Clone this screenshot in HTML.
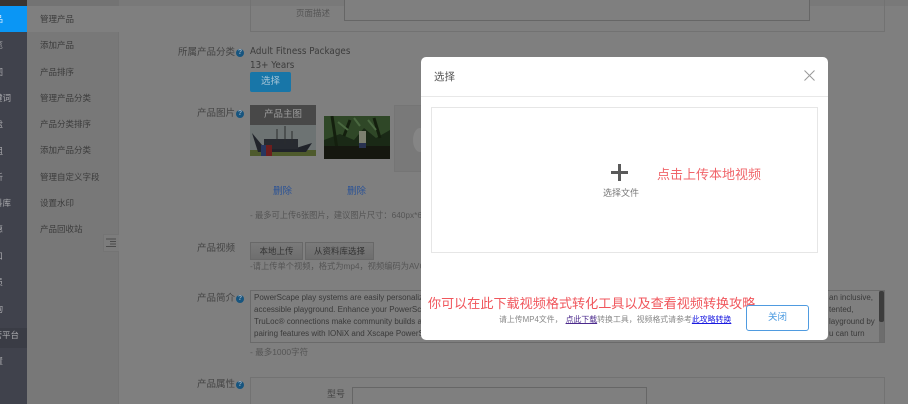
<!DOCTYPE html>
<html lang="zh"><head><meta charset="utf-8"><style>
html,body{margin:0;padding:0;width:908px;height:404px;overflow:hidden;background:#7f7f7f}
#w{position:absolute;left:0;top:0;width:908px;height:404px;overflow:hidden;background:#7f7f7f;font-family:"Liberation Sans","Noto Sans CJK SC",sans-serif;font-size:9px;color:#333;filter:blur(.35px)}
#w div,#w svg{position:absolute;box-sizing:border-box}
.t{white-space:nowrap;line-height:12px}
.s{left:0;width:3px;height:14px;line-height:14px;font-size:8.500px;color:#a9a9ad;text-align:right;overflow:hidden;white-space:nowrap;direction:rtl}
.m{left:40px;font-size:8.500px;color:#3c3c3c;white-space:nowrap;line-height:12px}
.l{font-size:9.500px;color:#444;white-space:nowrap;line-height:12px}
.q{width:8px;height:8px;border-radius:50%;background:#17557f;color:#9ab;font-size:7px;line-height:8px;text-align:center;font-weight:bold}
.g{color:#555;font-size:8.250px;white-space:nowrap;line-height:12px}
.p{font-size:8px;color:#3a3a3a}
</style></head><body><div id="w">
<div style="left:0;top:0;width:27px;height:404px;background:#40424c"></div>
<div style="left:0;top:0;width:27px;height:6px;background:#3a3430"></div>
<div style="left:0;top:6px;width:27px;height:26px;background:#0a96f5"></div>
<div style="left:0;top:328px;width:27px;height:20px;background:#3a3c45"></div>
<div class="s" style="top:12px;color:#dfefff">品</div>
<div class="s" style="top:38px">览</div>
<div class="s" style="top:65px">图</div>
<div class="s" style="top:91px;width:11px">键词</div>
<div class="s" style="top:117px">盘</div>
<div class="s" style="top:144px">组</div>
<div class="s" style="top:170px">析</div>
<div class="s" style="top:196px;width:11px">料库</div>
<div class="s" style="top:222px">惠</div>
<div class="s" style="top:249px">口</div>
<div class="s" style="top:275px">员</div>
<div class="s" style="top:302px">询</div>
<div class="s" style="top:328px;width:19px">营平台</div>
<div class="s" style="top:354px">置</div>

<div style="left:27px;top:0;width:92px;height:404px;background:#787878;border-right:1px solid #747474"></div>
<div style="left:27px;top:0;width:92px;height:6px;background:#737373"></div>
<div style="left:27px;top:6px;width:93px;height:26px;background:#7f7f7f"></div>
<div class="m" style="top:13px">管理产品</div>
<div class="m" style="top:39px">添加产品</div>
<div class="m" style="top:66px">产品排序</div>
<div class="m" style="top:92px">管理产品分类</div>
<div class="m" style="top:118px">产品分类排序</div>
<div class="m" style="top:144px">添加产品分类</div>
<div class="m" style="top:171px">管理自定义字段</div>
<div class="m" style="top:197px">设置水印</div>
<div class="m" style="top:223px">产品回收站</div>
<div style="left:103px;top:234px;width:16px;height:18px;background:#7c7c7c;border:1px solid #747474;border-right:0"></div>
<svg style="left:106px;top:238px" width="11" height="10" viewBox="0 0 11 10"><path d="M0 1h10M4 3.500h6M4 6h6M0 8.500h10" stroke="#4a4a4a" stroke-width="1" fill="none"/></svg>

<div style="left:119px;top:0;width:789px;height:6px;background:#797979"></div>
<div style="left:250px;top:0;width:635px;height:32px;border:1px solid #727272;border-top:0"></div>
<div class="g" style="left:296px;top:7px;font-size:8.500px">页面描述</div>
<div style="left:344px;top:-2px;width:466px;height:23px;border:1px solid #666;background:#7f7f7f"></div>

<div class="l" style="left:178px;top:47px">所属产品分类</div><div class="q" style="left:236px;top:49px">?</div>
<div class="t" style="left:250px;top:46px;font-size:10px;letter-spacing:.05px;color:#3c3c3c;font-family:'DejaVu Sans','Liberation Sans',sans-serif;transform-origin:0 50%;transform:scaleX(.875)">Adult Fitness Packages</div>
<div class="t" style="left:250px;top:60px;font-size:10px;color:#3c3c3c;font-family:'DejaVu Sans','Liberation Sans',sans-serif;transform-origin:0 50%;transform:scaleX(.875)">13+ Years</div>
<div style="left:250px;top:72px;width:41px;height:20px;background:#1876a8;border-radius:2px;color:#a8c6d8;font-size:9.500px;line-height:20px;text-align:center">选择</div>

<div class="l" style="left:197px;top:108px">产品图片</div><div class="q" style="left:236px;top:110px">?</div>
<div style="left:250px;top:105px;width:66px;height:20px;background:#484848;color:#9d9d9d;font-size:9.500px;line-height:20px;text-align:center">产品主图</div>
<svg style="left:250px;top:125px" width="66" height="31" viewBox="0 0 66 31"><rect width="66" height="31" fill="#6d7373"/><rect y="25" width="66" height="6" fill="#4e5a2c"/><path d="M2 8l10 12h24l10 3 16-5-6 9H8z" fill="#20232a"/><path d="M14 14h34v10H14z" fill="#272a30"/><path d="M35 1v18M27 4v14M42 6v12" stroke="#2a2c2e" stroke-width="1"/><rect x="11" y="20" width="5" height="11" fill="#27365f"/><rect x="16" y="20" width="6" height="11" fill="#6d1d1d"/></svg>
<svg style="left:324px;top:116px" width="66" height="43" viewBox="0 0 66 43"><rect width="66" height="43" fill="#1a2916"/><path d="M0 0h66v14l-14 8-12-10-10 12-14-6-16 6z" fill="#2f4727"/><path d="M8 0l6 40M26 4l-6 16M50 2l6 20" stroke="#141f0e" stroke-width="3"/><path d="M14 6l10 8M44 4l8 10M30 2l6 8" stroke="#4a6840" stroke-width="2"/><rect y="30" width="66" height="13" fill="#15170f"/><rect x="35" y="15" width="7" height="12" fill="#7d8070"/><rect x="35" y="27" width="7" height="5" fill="#283250"/></svg>
<div style="left:394px;top:105px;width:28px;height:67px;background:#797979;border:1px solid #757575"></div>
<div style="left:413px;top:128px;width:14px;height:24px;border-radius:50%;background:#858585"></div>
<div class="t" style="left:273px;top:186px;font-size:9.500px;color:#2a5296">删除</div>
<div class="t" style="left:347px;top:186px;font-size:9.500px;color:#2a5296">删除</div>
<div class="g" style="left:250px;top:210px;width:171px;overflow:hidden">- 最多可上传6张图片，建议图片尺寸：640px*640px</div>

<div class="l" style="left:197px;top:243px">产品视频</div>
<div style="left:250px;top:242px;width:53px;height:18px;background:linear-gradient(#7a7a7a,#6e6e6e);border:1px solid #686868;font-size:8.500px;line-height:16px;text-align:center;color:#333">本地上传</div>
<div style="left:305px;top:242px;width:69px;height:18px;background:linear-gradient(#7a7a7a,#6e6e6e);border:1px solid #686868;font-size:8.500px;line-height:16px;text-align:center;color:#333">从资料库选择</div>
<div class="g" style="left:250px;top:261px;width:171px;overflow:hidden">-请上传单个视频，格式为mp4，视频编码为AVC(H264)</div>

<div class="l" style="left:197px;top:293px">产品简介</div><div class="q" style="left:236px;top:295px">?</div>
<div style="left:250px;top:290px;width:635px;height:53px;border:1px solid #6a6a6a"></div>
<div class="t p" style="left:254px;top:292px;width:170px;overflow:hidden">PowerScape play systems are easily personalized</div>
<div class="t p" style="left:254px;top:304px;width:170px;overflow:hidden">accessible playground. Enhance your PowerScape</div>
<div class="t p" style="left:254px;top:316px;width:170px;overflow:hidden">TruLoc® connections make community builds a</div>
<div class="t p" style="left:254px;top:328px;width:170px;overflow:hidden">pairing features with IONiX and Xscape PowerScape</div>
<div class="t p" style="left:829px;top:292px">an inclusive,</div>
<div class="t p" style="left:829px;top:304px">tented,</div>
<div class="t p" style="left:829px;top:316px">layground by</div>
<div class="t p" style="left:829px;top:328px">u can turn</div>
<div style="left:879px;top:291px;width:5px;height:51px;background:#6d6d6d"></div>
<div style="left:879px;top:291px;width:5px;height:31px;background:#3c3c3c;border-radius:2px"></div>
<div class="g" style="left:250px;top:346px;font-size:8.500px">- 最多1000字符</div>

<div class="l" style="left:197px;top:379px">产品属性</div><div class="q" style="left:236px;top:381px">?</div>
<div style="left:250px;top:377px;width:635px;height:40px;border:1px solid #727272"></div>
<div class="l" style="left:327px;top:388px;font-size:9px">型号</div>
<div style="left:352px;top:387px;width:295px;height:30px;border:1px solid #666"></div>

<div style="left:421px;top:57px;width:407px;height:283px;background:#fff;border-radius:5px"></div>
<div style="left:421px;top:96px;width:407px;height:1px;background:#e8e8e8"></div>
<div class="t" style="left:434px;top:71px;font-size:10.500px;color:#555">选择</div>
<svg style="left:804px;top:70px" width="11" height="11" viewBox="0 0 11 11"><path d="M.5.500l10 10M10.500.500l-10 10" stroke="#999" stroke-width="1" fill="none"/></svg>
<div style="left:431px;top:107px;width:387px;height:146px;border:1px solid #e6e6e6"></div>
<div style="left:611px;top:171px;width:17px;height:3px;background:#5a5a5a"></div>
<div style="left:618px;top:164px;width:3px;height:17px;background:#5a5a5a"></div>
<div class="t" style="left:603px;top:187px;font-size:9px;color:#777">选择文件</div>
<div class="t" style="left:657px;top:168px;font-size:13px;line-height:14px;color:#f0656a">点击上传本地视频</div>
<div class="t" style="left:428px;top:296px;font-size:13.100px;line-height:15px;color:#f0565c">你可以在此下载视频格式转化工具以及查看视频转换攻略</div>
<div class="t" style="left:499px;top:314px;font-size:7.900px;color:#888">请上传MP4文件，<span style="margin-left:3px;color:#4b2a8c;text-decoration:underline">点此下载</span>转换工具，视频格式请参考<span style="color:#1a1ae0;text-decoration:underline">此攻略转换</span></div>
<div style="left:746px;top:305px;width:63px;height:26px;border:1px solid #4f9be0;border-radius:3px;background:#fff;color:#4a9ae0;font-size:9.500px;line-height:24px;text-align:center">关闭</div>
</div></body></html>
